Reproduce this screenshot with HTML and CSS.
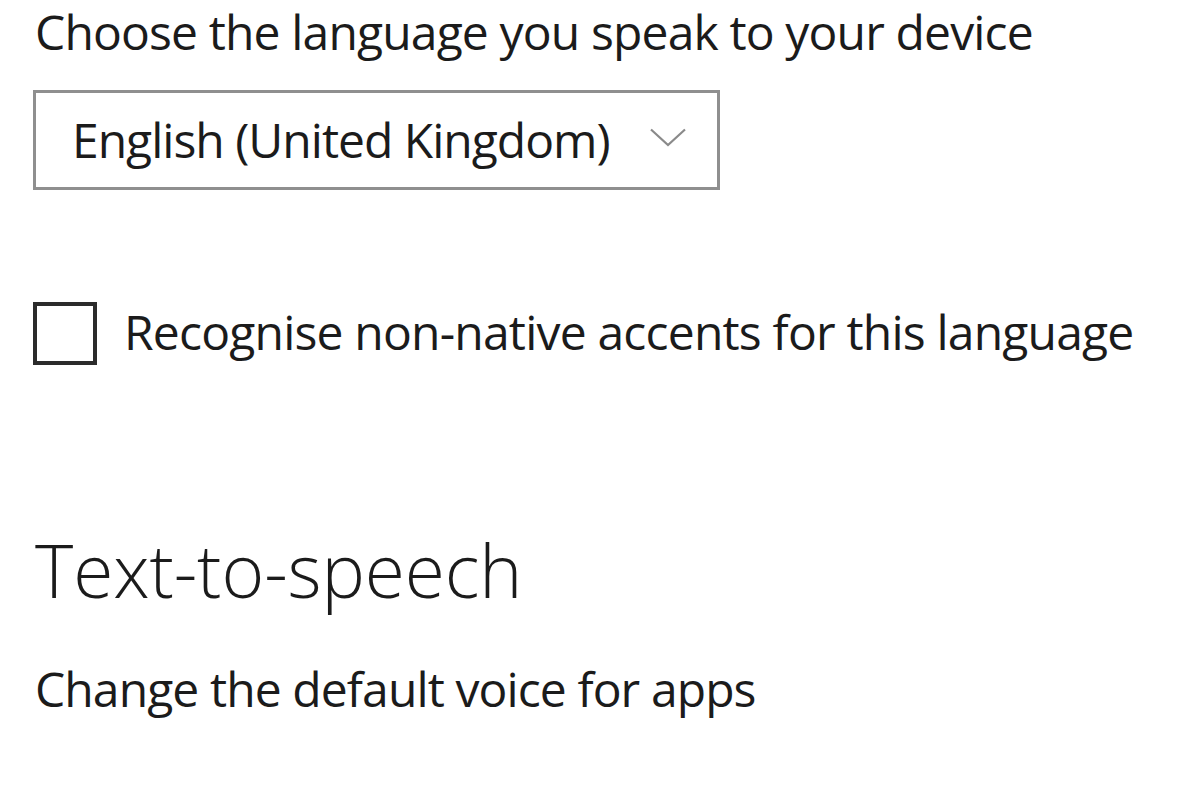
FILE: index.html
```html
<!DOCTYPE html>
<html lang="en">
<head>
<meta charset="utf-8">
<title>Speech settings</title>
<link rel="stylesheet" href="styles.css">
</head>
<body>
<main class="page">
  <p class="label">Choose the language you speak to your device</p>
  <div class="select">
    <span class="select-value">English (United Kingdom)</span>
    <svg class="chevron" viewBox="0 0 36 19" width="36" height="19" aria-hidden="true">
      <polyline points="1,1.5 18,17 35,1.5" fill="none" stroke="#8a8a8a" stroke-width="2.2"/>
    </svg>
  </div>
  <label class="check">
    <span class="box"></span>
    <span class="check-text">Recognise non-native accents for this language</span>
  </label>
  <h2 class="heading">Text-to-speech</h2>
  <p class="label last">Change the default voice for apps</p>
</main>
</body>
</html>
```

FILE: styles.css
```css
html, body {
  margin: 0;
  padding: 0;
  background: #ffffff;
}

.page {
  font-family: "Open Sans", "Noto Sans", sans-serif;
  color: #1b1b1b;
  padding-left: 33px;
  width: 1167px;
  height: 800px;
  overflow: hidden;
}

.label {
  margin: 0;
  font-size: 48px;
  line-height: 64px;
  letter-spacing: -0.85px;
  padding-left: 2px;
}

.select {
  margin-top: 26px;
  box-sizing: border-box;
  width: 687px;
  height: 100px;
  border: 3px solid #8f8f8f;
  display: flex;
  align-items: center;
  padding-left: 36px;
  padding-right: 30px;
  gap: 40px;
}

.select-value {
  font-size: 48px;
  line-height: 64px;
  letter-spacing: -1px;
  margin-top: -1px;
}

.chevron {
  flex: none;
  margin-top: -6px;
}

.check {
  margin-top: 112px;
  display: flex;
  align-items: center;
  gap: 27px;
}

.box {
  box-sizing: border-box;
  width: 64px;
  height: 63px;
  border: 4px solid #2b2b2b;
  flex: none;
}

.check-text {
  font-size: 48px;
  line-height: 64px;
  letter-spacing: -0.8px;
  margin-top: -4px;
}

.heading {
  margin: 160px 0 0;
  font-size: 73px;
  font-weight: 300;
  line-height: 90px;
  letter-spacing: -0.1px;
  padding-left: 2px;
}

.last {
  margin-top: 42px;
  letter-spacing: -0.9px;
}
```
